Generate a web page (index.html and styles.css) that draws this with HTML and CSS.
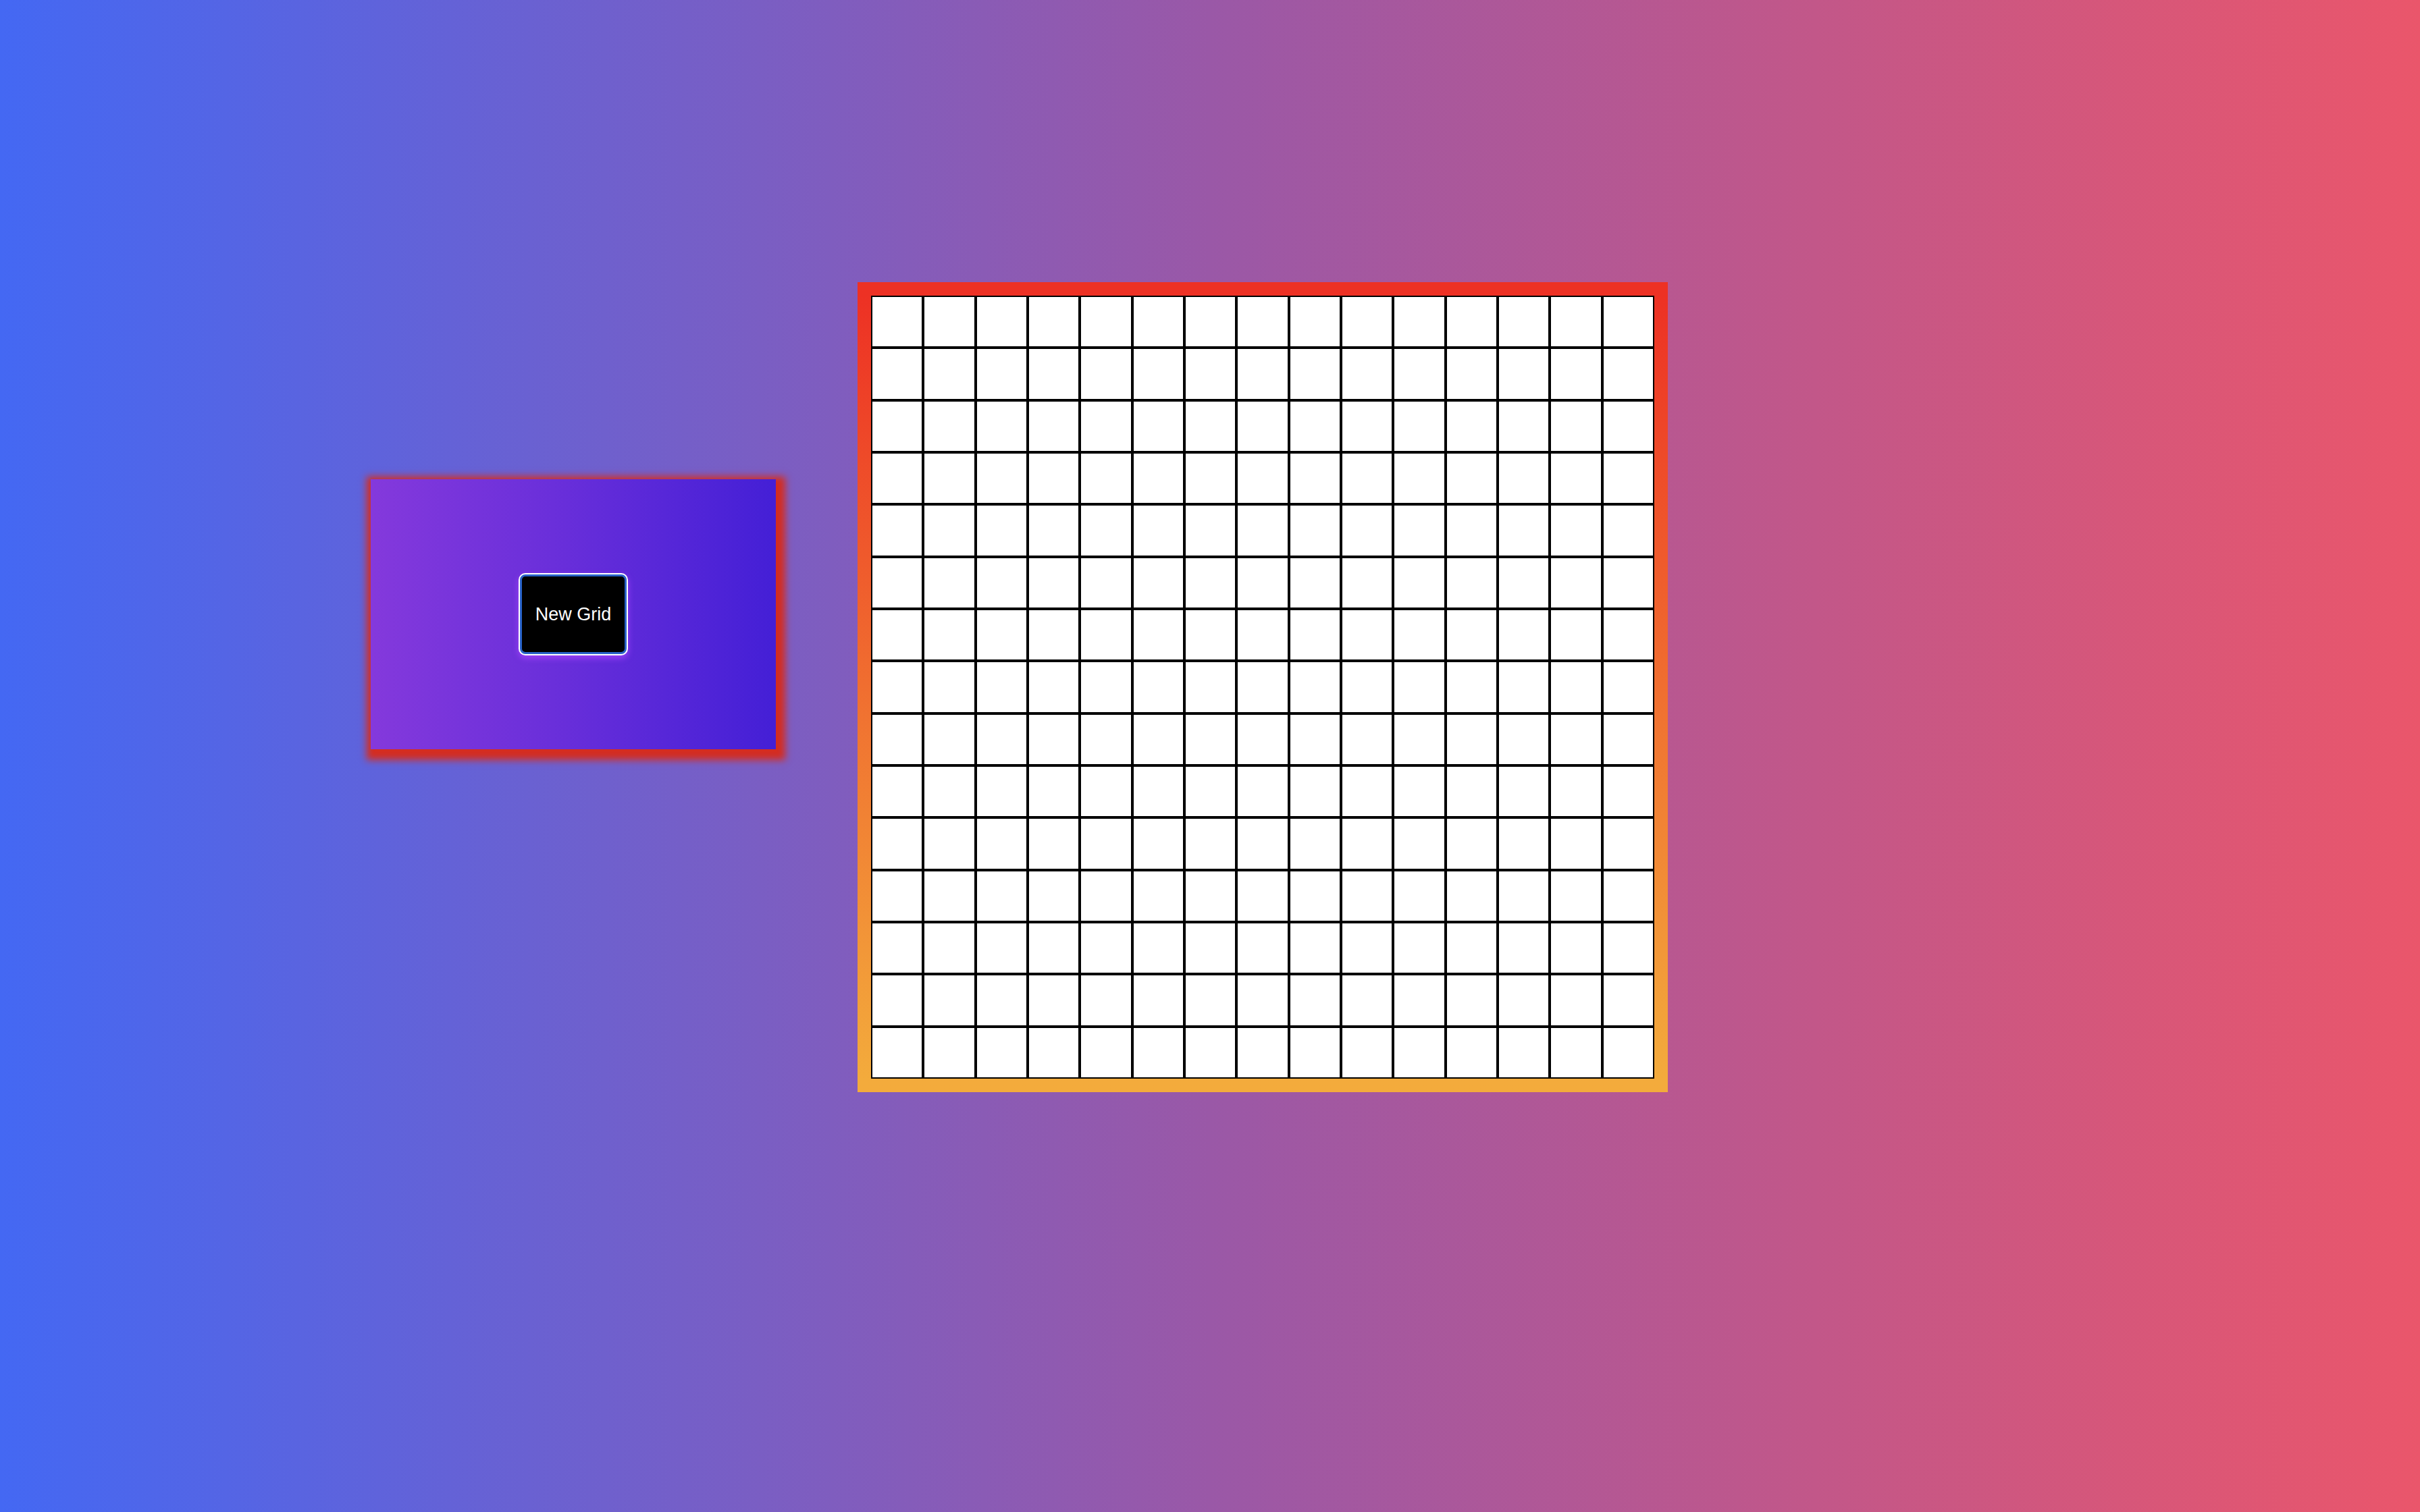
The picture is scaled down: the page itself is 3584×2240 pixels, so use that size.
FILE: index.html
```html
<!DOCTYPE html>
<html lang="en">
<head>
<meta charset="utf-8">
<title>Grid</title>
<link rel="stylesheet" href="styles.css">
</head>
<body>
<main class="layout">
  <section class="panel">
    <button class="new-grid" type="button">New Grid</button>
  </section>
  <section class="board">
    <div class="grid" id="grid"></div>
  </section>
</main>
<script src="script.js"></script>
</body>
</html>
```

FILE: styles.css
```css
* { box-sizing: border-box; }
html, body {
  margin: 0;
  padding: 0;
  width: 3584px;
  height: 2240px;
}
body {
  background: linear-gradient(to right, #4468f3 0%, #9a58a7 50%, #ea566b 100%);
  font-family: "Liberation Sans", Arial, sans-serif;
  overflow: hidden;
}
.layout {
  display: flex;
  flex-direction: row;
  align-items: flex-start;
  padding: 418px 0 0 549px;
  gap: 121px;
}
.panel {
  margin-top: 292px;
  width: 600px;
  height: 400px;
  background: linear-gradient(to right, #8439dc 0%, #6a2fda 45%, #441fd6 100%);
  box-shadow: 4px 6px 10px 10px #d42d21;
  display: flex;
  align-items: center;
  justify-content: center;
}
.new-grid {
  width: 158px;
  height: 118px;
  background: #000;
  color: #fff;
  font-family: "Liberation Sans", Arial, sans-serif;
  font-size: 27px;
  border: 3px solid #2862c8;
  border-radius: 8px;
  box-shadow: 0 0 0 2px #ffffff, 0 4px 10px 2px rgba(170, 70, 255, 0.8);
  padding: 0;
  cursor: pointer;
}
.board {
  width: 1200px;
  height: 1200px;
  border: 20px solid transparent;
  border-image: linear-gradient(to bottom, #ed3124, #f3ab3c) 1;
}
.grid {
  width: 1160px;
  height: 1160px;
  display: grid;
  grid-template-columns: repeat(15, 1fr);
  grid-template-rows: repeat(15, 1fr);
  background: #fff;
}
.cell {
  border: 2px solid #000;
  background: #fff;
}
```

FILE: script.js
```js
const grid = document.getElementById('grid');
for (let i = 0; i < 225; i++) {
  const c = document.createElement('div');
  c.className = 'cell';
  grid.appendChild(c);
}
```
